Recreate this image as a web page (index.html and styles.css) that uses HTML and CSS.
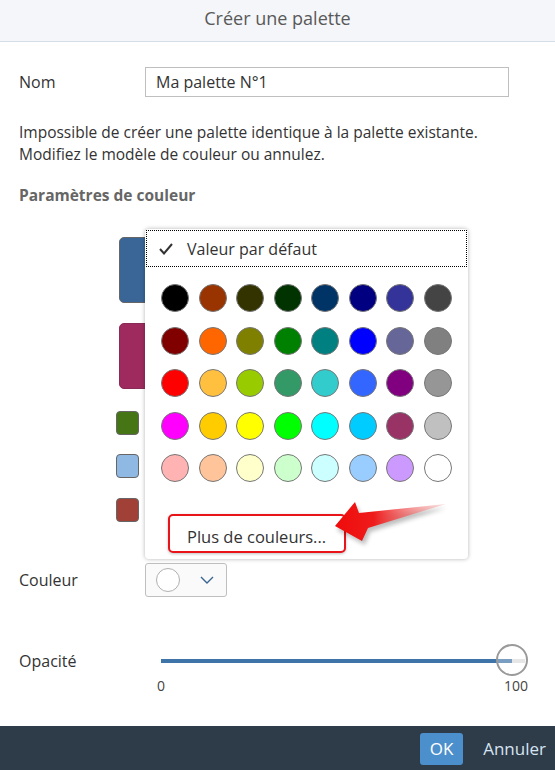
FILE: index.html
```html
<!DOCTYPE html>
<html lang="fr">
<head>
    <meta charset="UTF-8">
    <meta name="viewport" content="width=device-width, initial-scale=1.0">
    <title>Créer une palette</title>
    <link rel="stylesheet" href="styles.css">
</head>
<body>

    <!-- En-tête de la boîte de dialogue -->
    <div class="header">
        <h1>Créer une palette</h1>
    </div>

    <!-- Contenu -->
    <div class="content">

        <div class="row row-nom">
            <label>Nom</label>
            <input type="text" class="field" value="Ma palette N°1">
        </div>

        <p class="message">Impossible de créer une palette identique à la palette existante.<br>Modifiez le modèle de couleur ou annulez.</p>

        <h2>Paramètres de couleur</h2>

        <!-- Aperçu de la palette -->
        <div class="preview">
            <div class="swatch big sw-blue"></div>
            <div class="swatch big sw-pink"></div>
            <div class="swatch small sw-green"></div>
            <div class="swatch small sw-light"></div>
            <div class="swatch small sw-red"></div>
        </div>

        <div class="row row-couleur">
            <label>Couleur</label>
            <div class="select">
                <span class="dot"></span>
                <svg class="chevron" width="14" height="8" viewBox="0 0 14 8"><path d="M1 1 L7 7 L13 1" fill="none" stroke="#3a6591" stroke-width="1.4"/></svg>
            </div>
        </div>

        <div class="row row-opacite">
            <label>Opacité</label>
            <div class="slider">
                <div class="track"><div class="fill"></div></div>
                <div class="thumb"></div>
                <div class="ticks"><span>0</span><span>100</span></div>
            </div>
        </div>
    </div>

    <!-- Menu des couleurs -->
    <div class="popup">
        <div class="default">
            <svg width="14" height="12" viewBox="0 0 14 12"><path d="M1 6 L5 10.5 L13 1" fill="none" stroke="#333" stroke-width="2"/></svg>
            <span>Valeur par défaut</span>
        </div>
        <div class="grid" id="grid"></div>
        <button class="more">Plus de couleurs...</button>
    </div>

    <!-- Flèche d'annotation -->
    <svg class="arrow" width="555" height="770" viewBox="0 0 555 770">
        <defs>
            <linearGradient id="grad" x1="335" y1="0" x2="446" y2="0" gradientUnits="userSpaceOnUse">
                <stop offset="0" stop-color="#f00a0a"/>
                <stop offset="0.35" stop-color="#ef1c1c"/>
                <stop offset="1" stop-color="#f6b0b0" stop-opacity="0.4"/>
            </linearGradient>
            <filter id="blur"><feGaussianBlur stdDeviation="2"/></filter>
        </defs>
        <polygon points="337,530 357,506 361,517 446,508 370,532 365,545" fill="rgba(0,0,0,0.25)" filter="url(#blur)"/>
        <polygon points="335,526 355,502 359,513 446,504 368,528 362,541" fill="url(#grad)"/>
    </svg>

    <!-- Pied de page -->
    <div class="footer">
        <button class="ok">OK</button>
        <button class="cancel">Annuler</button>
    </div>

    <script>
        const couleurs = [
            '#000000', '#993300', '#333300', '#003300', '#003366', '#000080', '#333399', '#444444',
            '#800000', '#ff6600', '#808000', '#008000', '#008080', '#0000ff', '#666699', '#808080',
            '#ff0000', '#ffc040', '#99cc00', '#339966', '#33cccc', '#3366ff', '#800080', '#969696',
            '#ff00ff', '#ffcc00', '#ffff00', '#00ff00', '#00ffff', '#00ccff', '#993366', '#c0c0c0',
            '#ffb3b3', '#ffc499', '#ffffcc', '#ccffcc', '#ccffff', '#99ccff', '#cc99ff', '#ffffff'
        ];
        const grid = document.getElementById('grid');
        couleurs.forEach(function(c) {
            const d = document.createElement('span');
            d.className = 'circle';
            d.style.background = c;
            grid.appendChild(d);
        });
    </script>
</body>
</html>
```

FILE: styles.css
```css
/* Page */
body {
    font-family: "Open Sans", "Liberation Sans", Arial, sans-serif;
    margin: 0;
    height: 770px;
    display: flex;
    flex-direction: column;
    background-color: #fff;
    color: #333;
    position: relative;
    overflow: hidden;
}

/* En-tête */
.header {
    height: 41px;
    background-color: #f4f6f9;
    border-bottom: 1px solid #d5dde6;
    display: flex;
    align-items: center;
    justify-content: center;
}

.header h1 {
    margin: 0 0 6px;
    font-size: 18px;
    font-weight: normal;
    color: #595959;
}

/* Contenu */
.content {
    padding: 25px 19px 0;
}

.row {
    display: grid;
    grid-template-columns: 126px 1fr;
    align-items: center;
    font-size: 16px;
}

.field {
    width: 364px;
    height: 30px;
    box-sizing: border-box;
    border: 1px solid #bfbfbf;
    padding: 0 10px;
    font-family: inherit;
    font-size: 16px;
    color: #333;
}

.message {
    margin: 24px 0 0;
    font-size: 15.5px;
    line-height: 22px;
    color: #333;
}

h2 {
    margin: 19px 0 0;
    font-size: 15.5px;
    line-height: 22px;
    font-weight: bold;
    color: #666;
}

/* Aperçu */
.preview {
    margin: 31px 0 0 97px;
    display: flex;
    flex-direction: column;
    align-items: flex-start;
}

.swatch {
    box-sizing: border-box;
    border: 1px solid #666;
}

.swatch.big {
    width: 60px;
    height: 66px;
    margin-left: 3px;
    border-radius: 5px;
}

.swatch.small {
    width: 23px;
    height: 24px;
    border-radius: 4px;
}

.sw-blue { background: #3a6597; margin-bottom: 20px; }
.sw-pink { background: #9e2a5e; border-color: #8a2a56; margin-bottom: 22px; }
.sw-green { background: #457515; margin-bottom: 19px; }
.sw-light { background: #8fb8e3; margin-bottom: 20px; }
.sw-red { background: #a04037; }

/* Sélecteur de couleur */
.row-couleur {
    margin-top: 41px;
}

.select {
    width: 82px;
    height: 34px;
    box-sizing: border-box;
    border: 1px solid #bfbfbf;
    border-radius: 3px;
    background: #fafafa;
    display: flex;
    align-items: center;
    gap: 20px;
    padding-left: 10px;
}

.dot {
    width: 22px;
    height: 22px;
    border: 1px solid #b0b0b0;
    border-radius: 50%;
    background: #fff;
}

/* Curseur d'opacité */
.row-opacite {
    margin-top: 32px;
}

.slider {
    position: relative;
    height: 64px;
    margin-left: 16px;
    width: 364px;
}

.track {
    position: relative;
    top: 30px;
    height: 4px;
    background: #dcdcdc;
}

.fill {
    width: 351px;
    height: 4px;
    background: #3f74a8;
}

.thumb {
    position: absolute;
    left: 335px;
    top: 15px;
    width: 32px;
    height: 32px;
    box-sizing: border-box;
    border: 2px solid #9a9a9a;
    border-radius: 50%;
    background: rgba(255, 255, 255, 0.3);
}

.ticks {
    position: relative;
    top: 43px;
    display: flex;
    justify-content: space-between;
    font-size: 14px;
    color: #444;
    margin-left: -4px;
    margin-right: -3px;
}

/* Menu des couleurs */
.popup {
    position: absolute;
    left: 145px;
    top: 229px;
    width: 323px;
    height: 330px;
    box-sizing: border-box;
    background: #fff;
    border-radius: 4px;
    box-shadow: 0 0 4px rgba(0, 0, 0, 0.3);
    padding: 1px;
}

.default {
    height: 37px;
    box-sizing: border-box;
    border: 1px dotted #000;
    display: flex;
    align-items: center;
    padding-left: 12px;
    gap: 14px;
    font-size: 16px;
    color: #333;
}

.grid {
    display: grid;
    grid-template-columns: repeat(8, 28px);
    column-gap: 9.5px;
    row-gap: 14.5px;
    margin: 17px 0 0 15px;
}

.circle {
    width: 28px;
    height: 28px;
    box-sizing: border-box;
    border: 1px solid #777;
    border-radius: 50%;
}

.more {
    margin: 32px 0 0 22px;
    height: 39px;
    width: 178px;
    box-sizing: border-box;
    border: 2px solid #e8141a;
    border-radius: 5px;
    background: #fff;
    box-shadow: 0 1px 3px rgba(0, 0, 0, 0.25);
    font-family: inherit;
    font-size: 16.5px;
    color: #333;
    text-align: left;
    padding: 5px 0 0 17px;
}

.arrow {
    position: absolute;
    left: 0;
    top: 0;
    pointer-events: none;
}

/* Pied de page */
.footer {
    margin-top: auto;
    height: 44px;
    background-color: #2e3b48;
    display: flex;
    align-items: center;
    justify-content: flex-end;
    padding-right: 9px;
    gap: 20px;
}

.footer button {
    font-family: inherit;
    font-size: 17px;
    border: none;
    cursor: pointer;
}

.ok {
    background-color: #4b8fcc;
    color: #fff;
    width: 43px;
    height: 32px;
    border-radius: 3px;
    margin-top: 1px;
}

.cancel {
    background: none;
    color: #d6e4f2;
    padding: 0;
}
```
